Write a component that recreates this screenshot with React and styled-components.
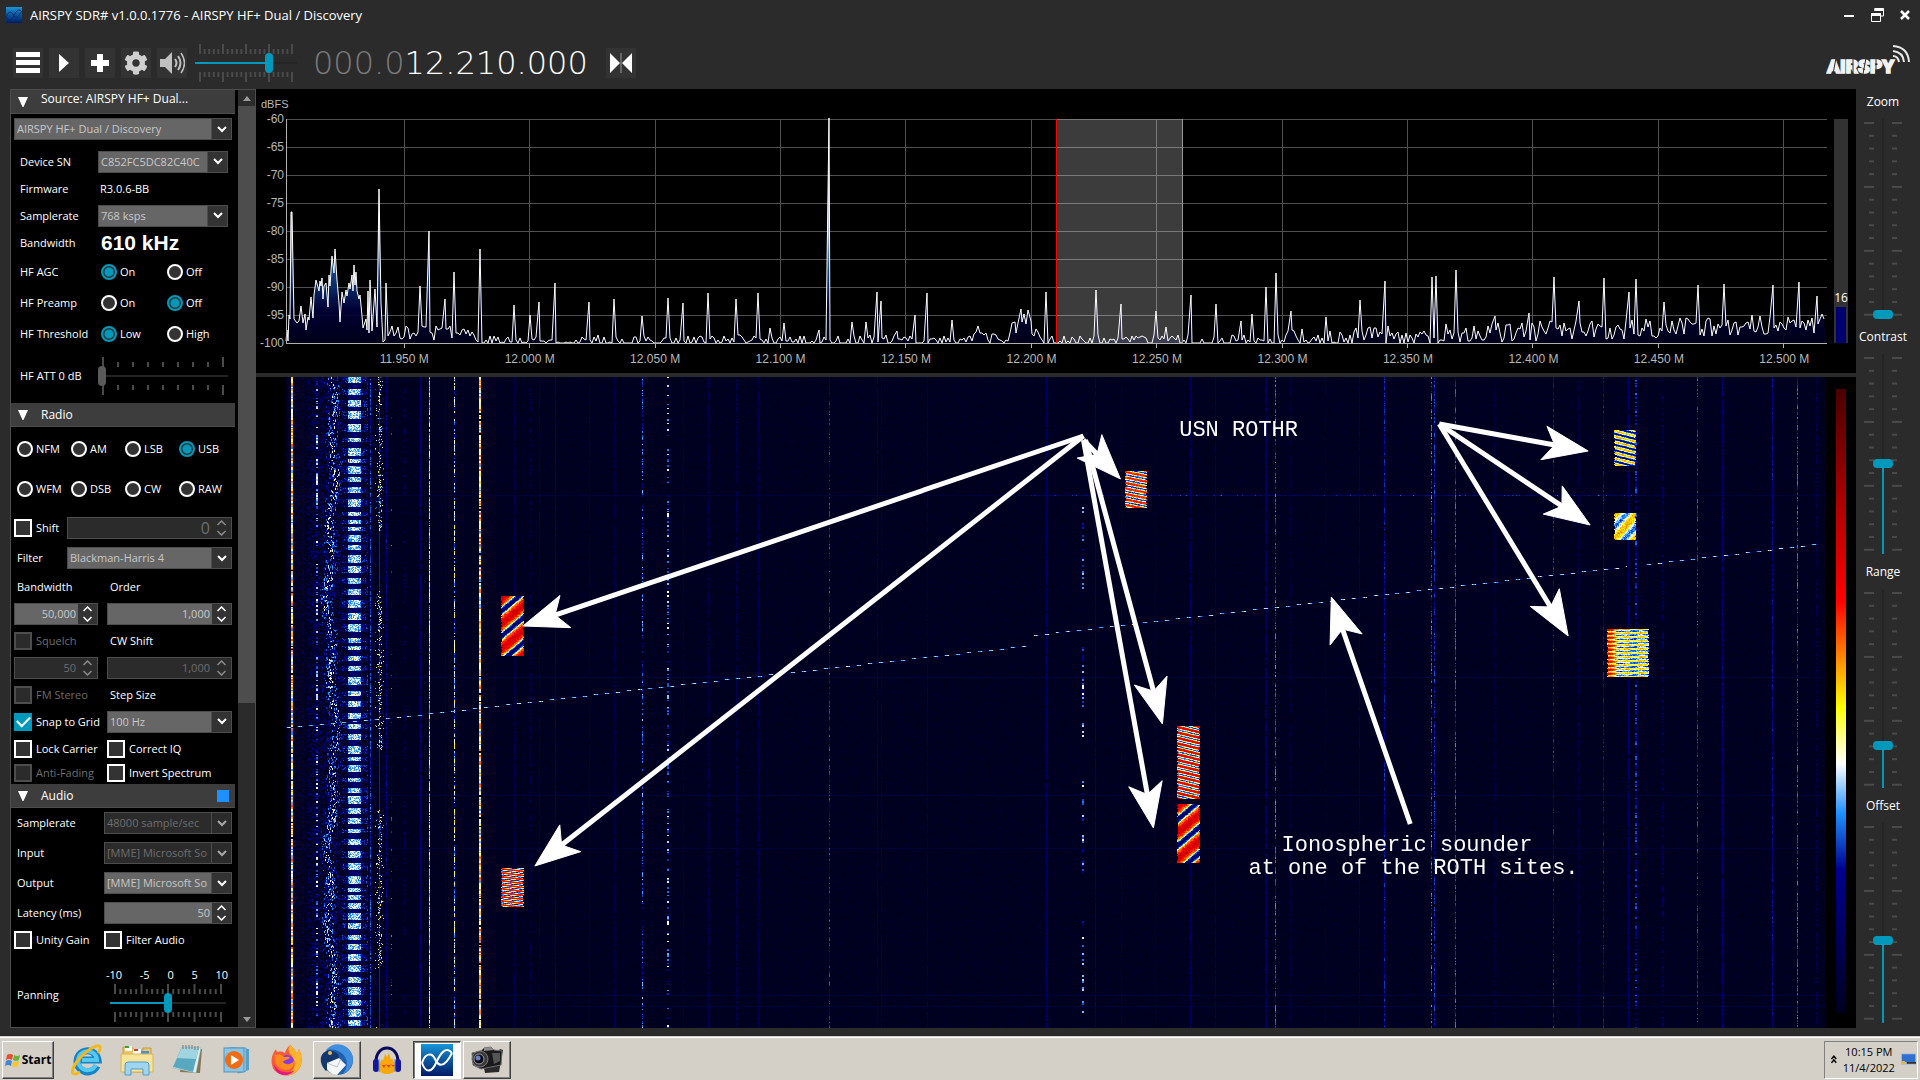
import { useEffect, useId, useRef, useState } from 'react';
import styled, { createGlobalStyle, css } from 'styled-components';
import { FaCog } from 'react-icons/fa';

const color = {
    window: '#2b2b2b',
    button: '#333333',
    header: '#3d3d3d',
    line: '#4d4d4d',
    field: '#666666',
    fieldText: '#c8c8c8',
    muted: '#6e6e6e',
    accent: '#0099bc',
    task: '#d4d0c8',
};

const GlobalStyle = createGlobalStyle`
    * {
        box-sizing: border-box;
    }

    body {
        margin: 0;
        background: ${color.window};
        color: #fff;
        font: 11px/14px 'Open Sans', 'Noto Sans', sans-serif;
    }

    button, input, select {
        margin: 0;
        padding: 0;
        border: 0;
        font: inherit;
        color: inherit;
    }
`;

/* ---------- helpers ---------- */

function makeRandom(seed) {
    let a = seed;
    return () => {
        a = (a + 0x6d2b79f5) | 0;
        let t = Math.imul(a ^ (a >>> 15), 1 | a);
        t = (t + Math.imul(t ^ (t >>> 7), 61 | t)) ^ t;
        return ((t ^ (t >>> 14)) >>> 0) / 4294967296;
    };
}

/* ---------- window frame ---------- */

const Screen = styled.div`
    display: flex;
    flex-direction: column;
    min-height: 100vh;
`;

const TitleBar = styled.header`
    display: flex;
    align-items: center;
    height: 30px;
    padding: 0 5px 0 6px;
`;

const TitleText = styled.h1`
    flex: 1;
    margin: 0 0 0 8px;
    font-size: 13px;
    font-weight: 400;
`;

const WindowButton = styled.button`
    display: flex;
    align-items: center;
    justify-content: center;
    width: 28px;
    height: 24px;
    background: none;

    &:last-child {
        width: 20px;
        margin-left: 4px;
    }
`;

const Toolbar = styled.div`
    display: flex;
    align-items: center;
    height: 59px;
    padding: 6px 10px 0 13px;
`;

const ToolGroup = styled.div`
    display: flex;
    gap: 6px;
`;

const ToolButton = styled.button`
    display: flex;
    align-items: center;
    justify-content: center;
    width: 30px;
    height: 30px;
    background: ${color.button};
    color: #fff;
`;

const VolumeBox = styled.div`
    width: 102px;
    margin: 0 16px 0 8px;
`;

const Frequency = styled.output`
    display: flex;
    margin-right: 18px;
    color: #fff;
    font: 200 32px/32px 'DejaVu Sans Light', 'DejaVu Sans', sans-serif;
`;

const Idle = styled.span`
    color: #7a7a7a;
`;

const Logo = styled.svg`
    margin: 0 0 8px auto;
`;

const Workspace = styled.main`
    flex: 1;
    display: flex;
    min-height: 0;
    padding: 0 0 8px 10px;
`;

/* ---------- side panel ---------- */

const Sidebar = styled.aside`
    display: flex;
    flex: none;
    width: 246px;
    border: 1px solid ${color.line};
    border-right: 0;
    background: #000;
`;

const Sections = styled.div`
    flex: 1;
    margin-right: 3px;
`;

const SectionHeader = styled.h2`
    display: flex;
    align-items: center;
    gap: 13px;
    height: 24px;
    margin: 0;
    padding: 0 6px 0 7px;
    border-bottom: 1px solid ${color.line};
    background: ${color.header};
    font-size: 12px;
    font-weight: 400;
`;

const HeaderText = styled.span`
    flex: 1;
    padding-bottom: ${p => (p.$raised ? '6px' : '0')};
`;

const Marker = styled.span`
    width: 12px;
    height: 12px;
    background: #1e90ff;
`;

const Row = styled.div`
    display: grid;
    grid-template-columns: ${p => p.$cols || '1fr'};
    align-items: center;
    height: ${p => p.$h || 27}px;
    margin-bottom: ${p => (p.$apart ? '4px' : '0')};
    padding: ${p => (p.$low ? '12px' : '0')} ${p => (p.$inset ? '7px 0 9px' : '3px 0')};
`;

const ModeGrid = styled.div`
    display: grid;
    grid-template-columns: repeat(4, 54px);
    grid-auto-rows: 40px;
    align-items: center;
    padding: 2px 0 4px 6px;
`;

const Caption = styled.label`
    padding-left: ${p => (p.$pad ? '3px' : '0')};
`;

const Strong = styled.span`
    padding-left: 3px;
    font: bold 21px/22px 'Liberation Sans', Arial, sans-serif;
    white-space: nowrap;
`;

const Value = styled.span`
    padding-left: 2px;
`;

const Choices = styled.div`
    display: grid;
    grid-template-columns: 66px 1fr;
    padding-left: 3px;
`;

const Option = styled.label`
    display: flex;
    align-items: center;
    gap: ${p => (p.$wide ? '4px' : '3px')};
    color: ${p => (p.$off ? color.muted : '#fff')};
    white-space: nowrap;
`;

const RadioInput = styled.input`
    appearance: none;
    flex: none;
    width: 16px;
    height: 16px;
    border: 2px solid #fff;
    border-radius: 50%;
    background: ${color.button};

    &:checked {
        border-color: ${color.accent};
        background: radial-gradient(${color.accent} 4px, ${color.button} 5px);
    }
`;

const CheckInput = styled.input`
    appearance: none;
    flex: none;
    display: grid;
    place-items: center;
    width: 18px;
    height: 18px;
    border: 2px solid #fff;
    background: ${color.button};

    &:disabled {
        border-color: ${color.line};
        background: ${color.window};
    }

    &:checked {
        border-color: ${color.accent};
        background: ${color.accent};
    }

    &:checked::after {
        content: '';
        width: 11px;
        height: 6px;
        margin-bottom: 4px;
        border: solid #fff;
        border-width: 0 0 2px 2px;
        transform: rotate(-45deg);
    }
`;

const fieldBox = css`
    display: flex;
    height: 22px;
    min-width: 0;
    border: 1px solid ${color.line};
    background: ${p => (p.$off ? color.window : color.field)};
    color: ${p => (p.$off ? color.muted : color.fieldText)};
`;

const ComboBox = styled.span`
    ${fieldBox}
`;

const ComboSelect = styled.select`
    appearance: none;
    flex: 1;
    min-width: 0;
    padding-left: 2px;
    background: none;
    outline: 0;
    opacity: 1;
`;

const ComboArrow = styled.span`
    display: grid;
    place-items: center;
    width: 20px;
    border-left: 1px solid ${color.line};
    background: ${p => (p.$off ? color.window : color.button)};
    color: ${p => (p.$off ? '#a8a8a8' : '#fff')};
    pointer-events: none;
`;

const SpinBox = styled.span`
    ${fieldBox}
`;

const SpinInput = styled.input`
    flex: 1;
    min-width: 0;
    padding-right: 2px;
    background: none;
    outline: 0;
    text-align: right;
    font-size: ${p => (p.$large ? '16px' : '11px')};
`;

const SpinButtons = styled.span`
    display: flex;
    flex-direction: column;
    justify-content: center;
    width: 19px;
    background: ${p => (p.$off ? color.window : color.button)};
    color: ${p => (p.$off ? '#8c8c8c' : '#fff')};
`;

const SpinButton = styled.button`
    display: grid;
    place-items: center;
    height: 10px;
    background: none;
`;

const SpinGap = styled.div`
    width: ${p => (p.$short ? '84px' : '100%')};
    display: grid;
`;

const Scrollbar = styled.div`
    display: flex;
    flex-direction: column;
    width: 18px;
    border-right: 1px solid ${color.line};
    background: ${color.window};
`;

const ScrollButton = styled.button`
    display: grid;
    place-items: center;
    height: 16px;
    background: ${color.window};
`;

const ScrollTrack = styled.div`
    flex: 1;
    display: flex;
    flex-direction: column;
`;

const ScrollThumb = styled.div`
    height: 66%;
    background: ${color.line};
`;

const ScaleNumbers = styled.div`
    display: flex;
    justify-content: space-between;
    margin: 0 -2px 2px -4px;
`;

const PanBox = styled.div`
    width: 116px;
    margin-left: 6px;
`;

const AttBox = styled.div`
    width: 130px;
`;

/* ---------- sliders ---------- */

const SliderStack = styled.div`
    display: grid;
    grid-template: minmax(0, 1fr) / minmax(0, 1fr);
    width: 100%;
    height: ${p => (p.$vertical ? '100%' : '38px')};

    > * {
        grid-area: 1 / 1;
    }
`;

const TickInset = styled.div`
    min-height: 0;
    padding: ${p => (p.$vertical ? '3px 0 5px' : '0 6px 0 4px')};
`;

const TickSvg = styled.svg`
    display: block;
    width: 100%;
    height: 100%;
    overflow: visible;
`;

const HRange = styled.input`
    appearance: none;
    width: 100%;
    height: 20px;
    align-self: center;
    background: linear-gradient(to right, ${p => p.$tint} ${p => p.$fill}%, #242424 ${p => p.$fill}%) center / 100% 2px no-repeat;

    &::-webkit-slider-thumb {
        appearance: none;
        width: 8px;
        height: 20px;
        border-radius: 4px;
        background: ${p => p.$thumb};
    }
`;

const VRange = styled.input`
    appearance: none;
    writing-mode: vertical-lr;
    direction: rtl;
    width: 20px;
    height: 100%;
    min-height: 0;
    justify-self: center;
    background: linear-gradient(to top, ${color.accent} ${p => p.$fill}%, #242424 ${p => p.$fill}%) center / 2px 100% no-repeat;

    &::-webkit-slider-thumb {
        appearance: none;
        width: 20px;
        height: 9px;
        border-radius: 4px;
        background: ${color.accent};
    }
`;

const LevelColumn = styled.aside`
    display: flex;
    flex-direction: column;
    flex: none;
    width: 64px;
    padding-right: 10px;
`;

const LevelGroup = styled.div`
    flex: 1;
    display: flex;
    flex-direction: column;
    align-items: center;
    min-height: 0;
    padding-bottom: 5px;
    font-size: 12px;
`;

const LevelLabel = styled.label`
    height: 30px;
    line-height: 26px;
`;

const LevelTrack = styled.div`
    flex: 1;
    width: 40px;
    min-height: 0;
`;

/* ---------- spectrum and waterfall ---------- */

const Displays = styled.div`
    flex: 1;
    display: flex;
    flex-direction: column;
    gap: 4px;
    min-width: 0;
`;

const SpectrumPanel = styled.section`
    display: grid;
    grid-template: 30px 224px 30px / 30px minmax(0, 1fr) 29px;
    background: #000;
    color: #b8b8b8;
    font: 12px/14px 'Liberation Sans', Arial, sans-serif;
`;

const Unit = styled.span`
    grid-column: 1 / -1;
    padding: 8px 0 0 5px;
    font-size: 11px;
`;

const DbAxis = styled.div`
    display: flex;
    flex-direction: column;
    justify-content: space-between;
    align-items: flex-end;
    padding-right: 2px;
`;

const DbMark = styled.span`
    height: 0;
    line-height: 0;
`;

const PlotSvg = styled.svg`
    width: 100%;
    height: 100%;
    overflow: visible;
`;

const Meter = styled.div`
    display: flex;
    flex-direction: column;
    justify-content: flex-end;
    align-items: center;
    width: 14px;
    margin-left: 7px;
    background: #323232;
    color: #fff;
    font: 12px/18px 'Open Sans', sans-serif;
`;

const MeterBar = styled.div`
    width: 10px;
    height: 36px;
    background: #000070;
`;

const FrequencyAxis = styled.div`
    grid-column: 2;
    display: flex;
    margin-right: -1.3%;
    padding: 9px 0 0 3.6%;

    span {
        flex: 1;
        text-align: center;
    }
`;

const WaterfallPanel = styled.section`
    flex: 1;
    display: grid;
    grid-template-columns: 30px minmax(0, 1fr) 30px;
    grid-template-rows: minmax(0, 1fr);
    min-height: 0;
    background: #000;
`;

const WaterfallArea = styled.div`
    position: relative;
    grid-column: 2;
`;

const WaterfallCanvas = styled.canvas`
    position: absolute;
    inset: 0;
    width: 100%;
    height: 100%;
    image-rendering: pixelated;
`;

const ArrowSvg = styled.svg`
    position: absolute;
    inset: 0;
    width: 100%;
    height: 100%;
    overflow: visible;
`;

const Note = styled.p`
    position: absolute;
    left: ${p => p.$left}%;
    top: ${p => p.$top}%;
    margin: 0;
    font: 22px/23px 'Liberation Mono', 'Courier New', monospace;
    text-align: center;
    white-space: pre;
`;

const Palette = styled.div`
    width: 10px;
    margin: 12px 0 15px 10px;
    background: linear-gradient(to top, #000020, #000090 23%, #1e90ff 32%, #fff 40%, #ff0 49%, #f00 66%, #4b0000);
`;

/* ---------- taskbar ---------- */

const Taskbar = styled.footer`
    display: flex;
    align-items: center;
    height: 44px;
    padding: 2px 2px 0;
    border-top: 1px solid ${color.task};
    background: ${color.task};
    box-shadow: inset 0 1px #fff;
    color: #000;
`;

const raised = css`
    border: 1px solid;
    border-color: #fff #404040 #404040 #fff;
    box-shadow: inset -1px -1px #808080;
`;

const StartButton = styled.button`
    ${raised}
    display: flex;
    align-items: center;
    justify-content: center;
    gap: 1px;
    width: 52px;
    height: 38px;
    margin-right: 8px;
    background: ${color.task};
    font: bold 12px/16px 'Open Sans', sans-serif;
`;

const TaskButton = styled.button`
    display: grid;
    place-items: center;
    width: 50px;
    height: 38px;
    background: none;
    ${p => p.$open && css`
        ${raised}
        width: 48px;
        margin: 0 1px;
    `}
    ${p => p.$active && css`
        width: 48px;
        margin: 0 1px;
        border: 1px solid;
        border-color: #404040 #fff #fff #404040;
        background: #fff;
        box-shadow: inset 1px 1px #808080;
    `}
`;

const Tray = styled.div`
    display: flex;
    align-items: center;
    gap: 6px;
    width: 94px;
    height: 38px;
    margin-left: auto;
    padding: 0 1px 0 6px;
    border: 1px solid;
    border-color: #808080 #fff #fff #808080;
`;

const Clock = styled.time`
    flex: 1;
    text-align: center;
    line-height: 16px;
    white-space: pre;
`;

/* ---------- small controls ---------- */

function Ticks({ count, every, vertical, ends }) {
    const marks = Array.from({ length: count }, (_, i) => i);
    return (
        <TickSvg aria-hidden="true">
            {marks.map(i => {
                const at = `${(i / (count - 1)) * 100}%`;
                const big = ends ? i === 0 || i === count - 1 : i % every === 0;
                const len = big ? 10 : 5;
                return vertical ? (
                    <g key={i} fill="#4a4a4a">
                        <rect x={11 - len} y={at} width={len} height="2" />
                        <rect x="29" y={at} width={len} height="2" />
                    </g>
                ) : (
                    <g key={i} fill="#4a4a4a">
                        <rect x={at} y={10 - len} width="2" height={len} />
                        <rect x={at} y="28" width="2" height={len} />
                    </g>
                );
            })}
        </TickSvg>
    );
}

function HSlider({ id, label, start, count, every = 5, ends, gray }) {
    const [value, setValue] = useState(start);
    return (
        <SliderStack>
            <TickInset><Ticks count={count} every={every} ends={ends} /></TickInset>
            <HRange
                id={id}
                type="range"
                aria-label={label}
                value={value}
                onChange={e => setValue(Number(e.target.value))}
                $fill={value}
                $tint={gray ? '#242424' : color.accent}
                $thumb={gray ? '#5a5a5a' : color.accent}
            />
        </SliderStack>
    );
}

function VSlider({ name, start }) {
    const id = useId();
    const [value, setValue] = useState(start);
    return (
        <LevelGroup>
            <LevelLabel htmlFor={id}>{name}</LevelLabel>
            <LevelTrack>
                <SliderStack $vertical>
                    <TickInset $vertical><Ticks count={16} every={5} vertical /></TickInset>
                    <VRange id={id} type="range" value={value} onChange={e => setValue(Number(e.target.value))} $fill={value} />
                </SliderStack>
            </LevelTrack>
        </LevelGroup>
    );
}

function Combo({ id, label, value, off }) {
    return (
        <ComboBox $off={off}>
            <ComboSelect id={id} aria-label={label} disabled={off}>
                <option>{value}</option>
            </ComboSelect>
            <ComboArrow $off={off}>
                <svg width="10" height="7" viewBox="0 0 10 7" fill="none" stroke="currentColor" strokeWidth="2">
                    <path d="M1 1l4 4 4-4" />
                </svg>
            </ComboArrow>
        </ComboBox>
    );
}

function Spin({ id, label, value, off, large, short }) {
    return (
        <SpinGap $short={short}>
            <SpinBox $off={off}>
                <SpinInput id={id} aria-label={label} defaultValue={value} disabled={off} $large={large} />
                <SpinButtons $off={off}>
                    <SpinButton aria-label="Increase">
                        <svg width="9" height="6" viewBox="0 0 9 6" fill="none" stroke="currentColor" strokeWidth="1.5"><path d="M.5 5l4-4 4 4" /></svg>
                    </SpinButton>
                    <SpinButton aria-label="Decrease">
                        <svg width="9" height="6" viewBox="0 0 9 6" fill="none" stroke="currentColor" strokeWidth="1.5"><path d="M.5 1l4 4 4-4" /></svg>
                    </SpinButton>
                </SpinButtons>
            </SpinBox>
        </SpinGap>
    );
}

function Check({ text, on, off }) {
    return (
        <Option $off={off} $wide>
            <CheckInput type="checkbox" defaultChecked={on} disabled={off} />
            {text}
        </Option>
    );
}

function Radios({ name, options, picked }) {
    return options.map(o => (
        <Option key={o}>
            <RadioInput type="radio" name={name} defaultChecked={o === picked} />
            {o}
        </Option>
    ));
}

function Header({ text, raisedText, children }) {
    return (
        <SectionHeader>
            <svg width="10" height="10" viewBox="0 0 10 10" fill="#fff"><path d="M0 0h10L5.500 10h-1z" /></svg>
            <HeaderText $raised={raisedText}>{text}</HeaderText>
            {children}
        </SectionHeader>
    );
}

/* ---------- panels ---------- */

const SWITCHES = [
    ['HF AGC', ['On', 'Off'], 'On'],
    ['HF Preamp', ['On', 'Off'], 'Off'],
    ['HF Threshold', ['Low', 'High'], 'Low'],
];

function SourceSection() {
    return (
        <section>
            <Header text="Source: AIRSPY HF+ Dual..." raisedText />
            <Row $h={30} $apart><Combo label="Source" value="AIRSPY HF+ Dual / Discovery" /></Row>
            <Row $inset $cols="78px 1fr">
                <Caption htmlFor="sn">Device SN</Caption>
                <Combo id="sn" value="C852FC5DC82C40C" />
            </Row>
            <Row $inset $cols="78px 1fr">
                <span>Firmware</span>
                <Value>R3.0.6-BB</Value>
            </Row>
            <Row $inset $cols="78px 1fr">
                <Caption htmlFor="rate">Samplerate</Caption>
                <Combo id="rate" value="768 ksps" />
            </Row>
            <Row $inset $cols="78px 1fr">
                <span>Bandwidth</span>
                <Strong>610 kHz</Strong>
            </Row>
            {SWITCHES.map(([name, options, picked]) => (
                <Row key={name} $inset $h={31} $cols="78px 1fr">
                    <span>{name}</span>
                    <Choices role="radiogroup" aria-label={name}>
                        <Radios name={name} options={options} picked={picked} />
                    </Choices>
                </Row>
            ))}
            <Row $inset $h={54} $cols="78px 1fr">
                <Caption htmlFor="att">HF ATT 0 dB</Caption>
                <AttBox><HSlider id="att" start={0} count={9} ends gray /></AttBox>
            </Row>
        </section>
    );
}

function RadioSection() {
    return (
        <section>
            <Header text="Radio" />
            <ModeGrid role="radiogroup" aria-label="Mode">
                <Radios name="mode" options={['NFM', 'AM', 'LSB', 'USB', 'WFM', 'DSB', 'CW', 'RAW']} picked="USB" />
            </ModeGrid>
            <Row $h={30} $cols="53px 1fr">
                <Check text="Shift" />
                <Spin label="Shift" value="0" off large />
            </Row>
            <Row $h={30} $cols="53px 1fr">
                <Caption $pad htmlFor="filter">Filter</Caption>
                <Combo id="filter" value="Blackman-Harris 4" />
            </Row>
            <Row $cols="93px 1fr">
                <Caption $pad htmlFor="bw">Bandwidth</Caption>
                <Caption $pad htmlFor="order">Order</Caption>
            </Row>
            <Row $cols="93px 1fr">
                <Spin id="bw" value="50,000" short />
                <Spin id="order" value="1,000" />
            </Row>
            <Row $cols="93px 1fr">
                <Check text="Squelch" off />
                <Caption $pad htmlFor="cw">CW Shift</Caption>
            </Row>
            <Row $cols="93px 1fr">
                <Spin label="Squelch" value="50" off short />
                <Spin id="cw" value="1,000" off />
            </Row>
            <Row $cols="93px 1fr">
                <Check text="FM Stereo" off />
                <Caption $pad htmlFor="step">Step Size</Caption>
            </Row>
            <Row $cols="93px 1fr">
                <Check text="Snap to Grid" on />
                <Combo id="step" value="100 Hz" />
            </Row>
            <Row $cols="93px 1fr">
                <Check text="Lock Carrier" />
                <Check text="Correct IQ" />
            </Row>
            <Row $h={22} $cols="93px 1fr">
                <Check text="Anti-Fading" off />
                <Check text="Invert Spectrum" />
            </Row>
        </section>
    );
}

function AudioSection() {
    return (
        <section>
            <Header text="Audio"><Marker /></Header>
            <Row $h={30} $cols="90px 1fr">
                <Caption $pad htmlFor="arate">Samplerate</Caption>
                <Combo id="arate" value="48000 sample/sec" off />
            </Row>
            <Row $h={30} $cols="90px 1fr">
                <Caption $pad htmlFor="ain">Input</Caption>
                <Combo id="ain" value="[MME] Microsoft So" off />
            </Row>
            <Row $h={30} $cols="90px 1fr">
                <Caption $pad htmlFor="aout">Output</Caption>
                <Combo id="aout" value="[MME] Microsoft So" />
            </Row>
            <Row $h={30} $cols="90px 1fr">
                <Caption $pad htmlFor="latency">Latency (ms)</Caption>
                <Spin id="latency" value="50" />
            </Row>
            <Row $h={24} $cols="90px 1fr">
                <Check text="Unity Gain" />
                <Check text="Filter Audio" />
            </Row>
            <Row $h={74} $low $cols="90px 1fr">
                <Caption $pad htmlFor="pan">Panning</Caption>
                <PanBox>
                    <ScaleNumbers>
                        {[-10, -5, 0, 5, 10].map(n => <span key={n}>{n}</span>)}
                    </ScaleNumbers>
                    <HSlider id="pan" start={50} count={21} />
                </PanBox>
            </Row>
        </section>
    );
}

/* ---------- spectrum ---------- */

const PLOT_W = 1541;

const LEFT_TRACE = [
    [0, 222], [1, 211], [2, 222], [3, 196], [4, 200], [5, 93], [6, 93], [8, 200], [11, 204], [13, 202], [15, 187],
    [17, 204], [19, 195], [20, 211], [22, 198], [23, 201], [25, 178], [27, 199], [28, 176], [30, 161], [33, 172],
    [34, 162], [35, 167], [36, 159], [37, 180], [38, 167], [40, 164], [42, 188], [43, 156], [44, 167], [46, 137],
    [48, 154], [49, 130], [51, 161], [53, 184], [54, 203], [56, 173], [58, 184], [60, 171], [61, 177], [63, 164],
    [64, 170], [66, 156], [67, 172], [68, 146], [69, 166], [70, 153], [71, 172], [73, 180], [74, 176], [76, 197],
    [77, 209], [80, 200], [81, 211], [82, 172], [83, 214], [84, 161], [86, 212], [89, 170], [91, 208], [93, 70],
    [95, 184], [97, 223], [99, 221], [100, 164], [102, 217],
];

const PEAKS = [
    [134, 167], [143, 112], [159, 180], [168, 153], [194, 130], [228, 186], [244, 196], [253, 183], [269, 164],
    [303, 183], [328, 180], [356, 197], [382, 179], [397, 184], [422, 174], [450, 180], [472, 174], [484, 209],
    [498, 204], [533, 211], [543, -1], [566, 203], [580, 203], [591, 173], [595, 182], [611, 212], [629, 196],
    [641, 174], [666, 201], [692, 207], [726, 204], [729, 203], [735, 190], [738, 195], [742, 191], [745, 202],
    [760, 173], [810, 171], [835, 185], [870, 192], [880, 208], [905, 176], [930, 185], [955, 202], [966, 195],
    [980, 168], [990, 154], [1005, 192], [1040, 198], [1074, 181], [1099, 162], [1146, 158], [1150, 157],
    [1170, 151], [1209, 197], [1243, 194], [1268, 158], [1293, 182], [1318, 159], [1343, 173], [1350, 160],
    [1378, 183], [1412, 166], [1438, 165], [1487, 166], [1513, 163], [1531, 177],
];

function buildTrace() {
    const rnd = makeRandom(77);
    const points = [...LEFT_TRACE];
    for (let x = 104; x < PLOT_W - 1; x += 2) {
        const peak = PEAKS.find(p => p[0] === x || p[0] === x + 1);
        if (peak) {
            points.push([peak[0], peak[1]]);
            continue;
        }
        let y;
        if (x < 190) y = 214 + (rnd() - 0.5) * 15;
        else if (x < 1000) {
            const hump = Math.exp(-(((x - 738) / 12) ** 2)) * 18 + Math.exp(-(((x - 690) / 14) ** 2)) * 5;
            y = 228 - rnd() * 12 - hump;
        } else {
            const t = (x - 1000) / 540;
            y = 220 - t * 16 + (rnd() - 0.5) * 20;
        }
        points.push([x, Math.min(224, Math.round(y))]);
    }
    return points.map(p => p.join(',')).join(' ');
}

const TRACE = buildTrace();
const FREQUENCIES = Array.from({ length: 12 }, (_, i) => (11.95 + i * 0.05).toFixed(3));
const LEVELS = [-60, -65, -70, -75, -80, -85, -90, -95, -100];

function Spectrum() {
    return (
        <SpectrumPanel>
            <Unit>dBFS</Unit>
            <DbAxis>
                {LEVELS.map(db => <DbMark key={db}>{db}</DbMark>)}
            </DbAxis>
            <PlotSvg viewBox="0 0 1541 224" preserveAspectRatio="none" role="img" aria-label="Spectrum">
                <defs>
                    <linearGradient id="trace" gradientUnits="userSpaceOnUse" x1="0" x2="0" y1="60" y2="224">
                        <stop offset="0" stopColor="#fff" />
                        <stop offset="0.35" stopColor="#a8c0e0" />
                        <stop offset="0.55" stopColor="#13509c" />
                        <stop offset="0.8" stopColor="#000038" />
                        <stop offset="1" stopColor="#00001c" />
                    </linearGradient>
                </defs>
                <g fill="#505050">
                    {LEVELS.slice(0, -1).map((db, i) => <rect key={db} x="0" y={i * 28} width="1541" height="1" />)}
                    {FREQUENCIES.map((f, i) => <rect key={f} x={Math.round(118 + i * 125.36)} y="0" width="1" height="224" />)}
                </g>
                <polygon points={`0,224 ${TRACE} 1540,224`} fill="url(#trace)" fillOpacity="0.9" />
                <polyline points={TRACE} fill="none" stroke="#fff" strokeWidth="1" />
                <g fill="#b0b0b0">
                    <rect x="0" y="0" width="1" height="225" />
                    <rect x="0" y="224" width="1541" height="1" />
                    {FREQUENCIES.map((f, i) => <rect key={f} x={Math.round(118 + i * 125.36)} y="224" width="1" height="5" />)}
                </g>
                <rect x="771" y="0" width="126" height="224" fill="#fff" fillOpacity="0.235" />
                <rect x="896" y="0" width="1" height="224" fill="#999" />
                <rect x="770" y="0" width="1" height="224" fill="#f00" />
            </PlotSvg>
            <Meter>
                16
                <MeterBar />
            </Meter>
            <FrequencyAxis>
                {FREQUENCIES.map(f => <span key={f}>{f} M</span>)}
            </FrequencyAxis>
        </SpectrumPanel>
    );
}

/* ---------- waterfall ---------- */

const STOPS = [
    [0, 0, 0, 26], [0.1, 0, 0, 70], [0.23, 0, 0, 144], [0.32, 30, 144, 255], [0.4, 255, 255, 255],
    [0.49, 255, 255, 0], [0.66, 255, 0, 0], [1, 75, 0, 0],
];

function paletteAt(v) {
    const t = Math.max(0, Math.min(0.999, v));
    let i = 1;
    while (STOPS[i][0] <= t) i += 1;
    const a = STOPS[i - 1];
    const b = STOPS[i];
    const k = (t - a[0]) / (b[0] - a[0]);
    return [1, 2, 3].map(n => a[n] + (b[n] - a[n]) * k);
}

// x, width, lowest level, highest level, share of rows that light up
const CARRIERS = [
    [5, 2, 0.3, 0.62, 0.97], [30, 2, 0.15, 0.42, 0.5], [84, 1, 0.18, 0.33, 0.9], [81, 1, 0.1, 0.3, 0.4],
    [100, 1, 0.12, 0.25, 0.9], [105, 1, 0.1, 0.33, 0.12], [118, 1, 0.08, 0.2, 0.3], [134, 1, 0.14, 0.22, 0.95],
    [143, 1, 0.34, 0.66, 0.95], [159, 1, 0.08, 0.12, 0.9], [168, 1, 0.2, 0.52, 0.85], [193, 2, 0.32, 0.62, 0.95],
    [228, 1, 0.08, 0.14, 0.9], [244, 1, 0.08, 0.15, 0.5], [253, 1, 0.08, 0.14, 0.9], [269, 1, 0.12, 0.22, 0.95],
    [303, 1, 0.08, 0.13, 0.9], [328, 1, 0.08, 0.13, 0.9], [356, 1, 0.15, 0.37, 0.6], [381, 2, 0.2, 0.42, 0.4],
    [397, 1, 0.08, 0.13, 0.9], [422, 1, 0.1, 0.15, 0.8], [450, 2, 0.08, 0.14, 0.8], [472, 1, 0.08, 0.15, 0.9],
    [543, 1, 0.14, 0.3, 0.95], [591, 1, 0.08, 0.18, 0.9], [595, 1, 0.08, 0.14, 0.8], [641, 1, 0.08, 0.15, 0.9],
    [760, 1, 0.12, 0.18, 0.95], [810, 1, 0.12, 0.22, 0.95], [836, 1, 0.08, 0.14, 0.7], [870, 1, 0.06, 0.12, 0.8],
    [905, 1, 0.1, 0.18, 0.9], [930, 1, 0.1, 0.17, 0.9], [980, 2, 0.1, 0.17, 0.9], [990, 1, 0.18, 0.33, 0.97],
    [1005, 1, 0.06, 0.12, 0.7], [1040, 1, 0.06, 0.12, 0.7], [1074, 1, 0.1, 0.17, 0.9], [1099, 1, 0.14, 0.28, 0.97],
    [1146, 1, 0.16, 0.34, 0.9], [1149, 1, 0.18, 0.3, 0.9], [1170, 1, 0.2, 0.32, 0.97], [1209, 1, 0.06, 0.12, 0.8],
    [1268, 1, 0.14, 0.28, 0.95], [1293, 1, 0.07, 0.13, 0.8], [1318, 1, 0.16, 0.27, 0.97], [1343, 1, 0.12, 0.22, 0.95],
    [1350, 2, 0.12, 0.3, 0.7], [1377, 2, 0.08, 0.18, 0.5], [1412, 1, 0.16, 0.3, 0.97], [1437, 1, 0.12, 0.24, 0.95],
    [1487, 1, 0.14, 0.26, 0.97], [1512, 1, 0.2, 0.32, 0.97], [1531, 1, 0.08, 0.16, 0.6],
];

// x, y, width, height, rise per pixel across, stripe period, base level, swing, solid bands
const BURSTS = [
    [215, 219, 23, 60, 0.85, 25, 0.46, 0.23, true],
    [215, 491, 23, 39, -0.12, 4, 0.46, 0.22, false],
    [840, 94, 22, 37, -0.2, 5.5, 0.46, 0.2, false],
    [892, 349, 23, 73, -0.24, 5.5, 0.5, 0.22, false],
    [892, 427, 23, 59, 0.85, 26, 0.46, 0.23, true],
    [1329, 53, 22, 36, -0.25, 5.5, 0.36, 0.17, false],
    [1329, 136, 22, 27, 1.1, 23, 0.42, 0.12, false],
    [1322, 252, 42, 48, 0.03, 4, 0.4, 0.11, false],
];

const SOUNDER = [
    [0, 350, 120, 339], [120, 339, 361, 311], [361, 311, 745, 268], [747, 258, 1109, 216],
    [1109, 216, 1342, 189], [1361, 187, 1537, 166],
];

function drawWaterfall(canvas) {
    const w = canvas.width;
    const h = canvas.height;
    const rnd = makeRandom(2022);
    const level = new Float32Array(w * h);
    const put = (x, y, v) => {
        if (x >= 0 && x < w && y >= 0 && y < h) level[Math.round(y) * w + Math.round(x)] = v;
    };

    for (let i = 0; i < level.length; i += 1) level[i] = rnd() < 0.06 ? 0.05 : rnd() * 0.025;

    // faint full-width rows
    [118, 300, 418, 471, 618, 629].forEach(y => {
        for (let x = 0; x < w; x += 1) put(x, y, 0.04 + rnd() * 0.07);
    });
    for (let x = 745; x < 1360; x += 1) put(x, 118, 0.1 + rnd() * rnd() * 0.22);

    // wide band noise on the left edge
    let burst = 0;
    let bright = false;
    for (let y = 0; y < h; y += 1) {
        for (let x = 0; x < 100; x += 1) if (rnd() < 0.3) put(x, y, rnd() * 0.12);
        const centre = 45 + 3 * Math.sin(y / 46) + 2 * Math.sin(y / 13);
        for (let x = 22; x < 57; x += 1) {
            const near = Math.exp(-(((x - centre) / 6) ** 2));
            if (rnd() < near * 0.3 + 0.12) {
                const v = 0.1 + rnd() * (0.12 + near * 0.22);
                put(x, y, v);
                put(x, y + 1, v);
            }
        }
        if (burst <= 0) {
            bright = !bright;
            burst = bright ? 4 + Math.floor(rnd() * 5) : 3 + Math.floor(rnd() * 4);
        }
        burst -= 1;
        for (let x = 56; x < 81; x += 1) {
            const core = x > 61 && x < 75;
            const mid = Math.exp(-(((x - 68) / 6) ** 2));
            if (bright) put(x, y, core ? 0.24 + mid * 0.07 + rnd() * 0.14 : rnd() * 0.29);
            else if (core) put(x, y, 0.04 + mid * 0.08 + rnd() * 0.1);
            else put(x, y, rnd() * 0.06);
        }
    }

    CARRIERS.forEach(([cx, cw, lo, hi, share]) => {
        let v = 0;
        for (let y = 0; y < h; y += 1) {
            if (y % 2 === 0 || rnd() < 0.4) v = rnd() < share ? lo + rnd() * (hi - lo) : 0;
            for (let x = 0; x < cw; x += 1) if (v) put(cx + x, y, v);
        }
    });

    // drifting carrier with a steady dark red centre
    for (let y = 0; y < h; y += 1) {
        const active = Math.sin(y / 37) + Math.sin(y / 17) > -0.5;
        if (active) {
            for (let x = 89; x < 98; x += 1) {
                if (rnd() < (x > 91 && x < 96 ? 0.24 : 0.06)) put(x, y, 0.2 + rnd() * 0.32);
            }
        }
        put(93, y, active && rnd() < 0.25 ? 0.5 : 0.88);
    }

    // keyed carrier in the middle
    for (let y = 90; y < h; y += 2) {
        if (Math.sin(y / 22) > -0.55 && rnd() < 0.4) {
            const v = 0.2 + rnd() * 0.2;
            for (let x = 797; x < 799; x += 1) {
                put(x, y, v);
                put(x, y + 1, v);
            }
        }
    }

    SOUNDER.forEach(([x1, y1, x2, y2]) => {
        for (let x = x1; x < x2; x += 11) {
            const y = y1 + ((y2 - y1) * (x - x1)) / (x2 - x1);
            for (let i = 0; i < 6 && x + i < x2; i += 1) put(x + i, y, i === 0 || i === 5 ? 0.25 : 0.32 + rnd() * 0.08);
        }
    });

    BURSTS.forEach(([bx, by, bw, bh, slope, period, base, swing, solid], n) => {
        for (let y = 0; y < bh; y += 1) {
            for (let x = 0; x < bw; x += 1) {
                const wave = Math.sin(((y + x * slope) / period) * Math.PI * 2 + 1);
                let v;
                if (solid) v = wave > -0.35 ? 0.6 + wave * 0.14 : 0.6 + (wave + 0.35) * 0.6 - 0.06;
                else v = base + (wave > 0 ? Math.sqrt(wave) : -(Math.abs(wave) ** 1.5)) * swing;
                v += (rnd() - 0.5) * 0.1;
                if (n === 7) v += Math.max(0, 0.2 - x * 0.015) + 0.04 * Math.sin(x / 2.4);
                if (rnd() < 0.6 || (x > 0 && x < bw - 1)) put(bx + x, by + y, v);
            }
        }
    });

    const ctx = canvas.getContext('2d');
    const image = ctx.createImageData(w, h);
    for (let i = 0; i < level.length; i += 1) {
        const [r, g, b] = paletteAt(level[i]);
        image.data.set([r, g, b, 255], i * 4);
    }
    ctx.putImageData(image, 0, 0);
}

const ARROWS = [
    [798, 59, 237, 249], [798, 59, 249, 489], [798, 63, 835, 102], [800, 63, 877, 347], [798, 63, 868, 451],
    [1154, 47, 1303, 74], [1154, 47, 1305, 148], [1154, 47, 1283, 259], [1125, 447, 1046, 220],
];

function Arrow({ from, to }) {
    const dx = to[0] - from[0];
    const dy = to[1] - from[1];
    const len = Math.hypot(dx, dy);
    const ux = dx / len;
    const uy = dy / len;
    const at = (back, side) => `${to[0] - ux * back - uy * side},${to[1] - uy * back + ux * side}`;
    return (
        <g>
            <line x1={from[0]} y1={from[1]} x2={to[0] - ux * 34} y2={to[1] - uy * 34} stroke="#fff" strokeWidth="5" />
            <polygon points={[at(0, 0), at(45, 17), at(34, 0), at(45, -17)].join(' ')} fill="#fff" stroke="#fff" strokeWidth="1" />
        </g>
    );
}

function Waterfall() {
    const ref = useRef(null);
    useEffect(() => {
        drawWaterfall(ref.current);
    }, []);

    return (
        <WaterfallPanel>
            <WaterfallArea>
                <WaterfallCanvas ref={ref} width={1541} height={651} />
                <ArrowSvg viewBox="0 0 1541 651" preserveAspectRatio="none" aria-hidden="true">
                    {ARROWS.map(a => <Arrow key={a.join()} from={a.slice(0, 2)} to={a.slice(2)} />)}
                </ArrowSvg>
                <Note $left={58} $top={6.4}>USN ROTHR</Note>
                <Note $left={62.500} $top={70.2}>{'Ionospheric sounder \nat one of the ROTH sites.'}</Note>
            </WaterfallArea>
            <Palette />
        </WaterfallPanel>
    );
}

/* ---------- icons ---------- */

function SdrIcon({ size }) {
    return (
        <svg width={size} height={size} viewBox="0 0 32 32">
            <defs>
                <linearGradient id="sdr" x1="0" x2="0" y1="0" y2="1">
                    <stop offset="0" stopColor="#1795d8" />
                    <stop offset="1" stopColor="#001a66" />
                </linearGradient>
            </defs>
            <rect width="32" height="32" fill="url(#sdr)" />
            <g fill="none" stroke={size > 20 ? '#fff' : '#062a6a'} strokeWidth="2">
                <path d="M1 19C4 9 11 8 14 15s9 10 17-6" />
                <path d="M1 19c4 11 10 9 14 0S25 1 31 9" />
            </g>
        </svg>
    );
}

function WindowsLogo() {
    return (
        <svg width="16" height="16" viewBox="0 0 16 16">
            <path d="M2 3q3-2 6 0L7 8Q4 6 1 8z" fill="#e8502a" />
            <path d="M9 3q3 2 6 0l-1 5q-3 2-6 0z" fill="#6ab43e" />
            <path d="M1 9q3-2 6 0l-1 5q-3-2-6 0z" fill="#3f86d8" />
            <path d="M8 9q3 2 6 0l-1 5q-3 2-6 0z" fill="#f8c626" />
        </svg>
    );
}

function ExplorerEIcon() {
    return (
        <svg width="32" height="32" viewBox="0 0 32 32" fill="none">
            <path d="M26 22a10.500 10.500 0 1 1 1-6H10" stroke="#1583c8" strokeWidth="7" />
            <path d="M25 21a9.500 9.500 0 1 1 1-5H11" stroke="#55c8f2" strokeWidth="4" />
            <path d="M27 9c4-6 2-9-4-6C14 7 4 18 2 25c-2 6 2 6 7 3" stroke="#f2b81c" strokeWidth="3" />
        </svg>
    );
}

function FolderIcon() {
    return (
        <svg width="34" height="32" viewBox="0 0 34 32">
            <path d="M3 3h9l2 3h9V4h8v24H3z" fill="#e9c766" stroke="#c39b3c" />
            <rect x="5" y="2" width="7" height="5" fill="#fff" />
            <rect x="5" y="2" width="4" height="2" fill="#3aa43a" />
            <rect x="13" y="5" width="8" height="5" fill="#fff" />
            <rect x="14" y="5" width="4" height="2" fill="#d43b26" />
            <rect x="21" y="7" width="8" height="4" fill="#4a90d8" />
            <path d="M1 10h32v18H1z" fill="#f7e39a" stroke="#d8b656" />
            <path d="M5 31V21q0-3 3-3h18q3 0 3 3v10h-6v-6H11v6z" fill="#9fd4f0" stroke="#4f9dcc" />
        </svg>
    );
}

function NotepadIcon() {
    return (
        <svg width="32" height="32" viewBox="0 0 32 32">
            <path d="M12 4l19 1-2 24-20-1z" fill="#8a7350" />
            <path d="M11 3l19 1-5 25-23-5z" fill="#dff1f5" stroke="#7fa8b0" strokeWidth=".5" />
            <path d="M11 3l17 1-6 24-20-5z" fill="#58a9bf" />
            <path d="M11 3l17 1-3 11-19-1z" fill="#a0d5e0" />
            <path d="M12 1v4M15 1v4M18 1v4M21 1v4M24 2v4M27 2v4" stroke="#777" />
        </svg>
    );
}

function MediaIcon() {
    return (
        <svg width="30" height="30" viewBox="0 0 30 30">
            <path d="M9 2l18 2v21l-10 3z" fill="#5a9fc8" />
            <path d="M6 3h18v23l-8 2z" fill="#a8d3ea" stroke="#5a9fc8" />
            <rect x="2" y="3" width="20" height="24" fill="#8cc4e6" stroke="#5193bd" />
            <circle cx="12" cy="15" r="9" fill="#ee6d14" />
            <path d="M9 10l8 5-8 5z" fill="#fff" />
        </svg>
    );
}

function FirefoxIcon() {
    return (
        <svg width="32" height="32" viewBox="0 0 32 32">
            <path d="M19 1c3 3 5 4 6 8 3-1 2-3 3-4 3 6 4 14 0 20-6 9-19 8-25 1C-1 19 0 11 5 5c0 2 1 3 2 3 4-1 5 0 7 1 1-4 3-6 5-8z" fill="#fb5a36" />
            <path d="M19 1c3 3 5 4 6 8 3-1 2-3 3-4 3 6 4 14 0 20-3 4-7 6-12 6 8-4 10-13 5-19-3-3-5-6-2-11z" fill="#ffb52b" />
            <circle cx="16" cy="18" r="7" fill="#8a3be0" />
            <path d="M4 11c4-2 7 0 9 2 3 0 5-1 6 1-2 2-5 1-7 4 2 3 8 3 11-1 1 7-6 11-12 8-6-2-8-8-7-14z" fill="#ff8a1e" />
            <path d="M3 20c3 8 14 11 21 6-4 5-10 6-15 4-4-2-6-6-6-10z" fill="#e31587" />
        </svg>
    );
}

function MailBirdIcon() {
    return (
        <svg width="34" height="34" viewBox="0 0 34 34">
            <circle cx="18" cy="17" r="15" fill="#1e5fae" />
            <path d="M6 7C14-3 28 1 32 11c3 9-2 17-9 20 6-8 5-17-3-22-5-3-10-3-14-2z" fill="#3f8ee0" />
            <path d="M1 14c2-6 8-8 14-5 4 2 5 5 3 8L6 28C2 24 0 19 1 14z" fill="#14376e" />
            <path d="M7 20l12-5 7 7-9 10C12 32 8 28 7 26z" fill="#f4f6f8" />
            <path d="M7 20l10 4 4-8" fill="none" stroke="#b8c2cc" />
            <circle cx="10" cy="10" r="2" fill="#e7bd55" />
        </svg>
    );
}

function HeadphonesIcon() {
    return (
        <svg width="30" height="30" viewBox="0 0 30 30">
            <path d="M4 18C3-2 27-2 26 18" fill="none" stroke="#0a0a5a" strokeWidth="3" />
            <path d="M7 19l3-5 1 2 2-7 2 3 2-4 2 7 1-2 3 6v7l-3 2-3 1h-4l-3-1-3-2z" fill="#f7a80c" />
            <path d="M7 20h16l-2 2-2-3-2 4-3-4-2 4-2-3z" fill="#ee3a1c" />
            <rect x="1" y="14" width="6" height="13" rx="3" fill="#16169a" />
            <rect x="23" y="14" width="6" height="13" rx="3" fill="#16169a" />
            <path d="M7 14v13M23 14v13" stroke="#4b8ef0" />
        </svg>
    );
}

function CameraIcon() {
    return (
        <svg width="34" height="32" viewBox="0 0 34 32">
            <path d="M14 24L30 5l3 1-4 22-14 1z" fill="#2a2a2a" />
            <path d="M2 9l9-2 3-3 7-1 3 3 8 1-1 14-20 4-8-4z" fill="#1a1a1a" stroke="#6c6c6c" />
            <path d="M14 4l7-1 3 3-10 1z" fill="#8c8c8c" />
            <circle cx="10" cy="15" r="8" fill="#3b3b3b" stroke="#777" />
            <circle cx="9" cy="15" r="5" fill="#0d0d1a" stroke="#999" />
            <circle cx="8" cy="14" r="2.500" fill="#6a7fc2" />
            <path d="M22 9h8v8l-6 3z" fill="#555" />
        </svg>
    );
}

function AirspyLogo() {
    return (
        <Logo width="84" height="34" viewBox="0 0 84 34" role="img" aria-label="AIRSPY">
            <text x="1" y="31" fill="#f2f2f2" stroke="#f2f2f2" strokeWidth="1.500" fontFamily="Roboto, sans-serif" fontWeight="900" fontSize="19">AIRSPY</text>
            <path d="M10 16l-3 16M27 16v16M40 16l-3 16M50 16v16" stroke={color.window} strokeWidth="1" />
            <g fill="none" stroke="#e8e8e8" strokeWidth="2">
                <path d="M67 14q5 0 6 6" />
                <path d="M67 9q10 1 11 11" />
                <path d="M67 4q15 1 16 16" />
            </g>
        </Logo>
    );
}

const TASKS = [
    ['Internet Explorer', <ExplorerEIcon />],
    ['Windows Explorer', <FolderIcon />],
    ['Notepad', <NotepadIcon />],
    ['Media Player', <MediaIcon />],
    ['Firefox', <FirefoxIcon />],
    ['Thunderbird', <MailBirdIcon />, 'open'],
    ['Audacity', <HeadphonesIcon />],
    ['SDR#', <SdrIcon size={32} />, 'active'],
    ['Camera', <CameraIcon />, 'open'],
];

function App() {
    return (
        <Screen>
            <GlobalStyle />
            <TitleBar>
                <SdrIcon size={16} />
                <TitleText>AIRSPY SDR# v1.0.0.1776 - AIRSPY HF+ Dual / Discovery</TitleText>
                <WindowButton aria-label="Minimize">
                    <svg width="10" height="10" viewBox="0 0 10 10"><path d="M0 5h10v2H0z" fill="#fff" /></svg>
                </WindowButton>
                <WindowButton aria-label="Restore">
                    <svg width="13" height="14" viewBox="0 0 13 14" fill="none" stroke="#fff">
                        <path d="M4 3V.5h8.500V8H10" /><path d="M3.500 1.500h9" strokeWidth="3" />
                        <path d="M.5 6v7.500h9V6" /><path d="M0 6.500h10" strokeWidth="3" />
                    </svg>
                </WindowButton>
                <WindowButton aria-label="Close">
                    <svg width="10" height="10" viewBox="0 0 10 10" stroke="#fff" strokeWidth="2.500"><path d="M1 1l8 8M9 1L1 9" /></svg>
                </WindowButton>
            </TitleBar>

            <Toolbar>
                <ToolGroup>
                    <ToolButton aria-label="Menu">
                        <svg width="24" height="22" viewBox="0 0 24 22" fill="#fff"><path d="M0 0h24v5H0zM0 8h24v5H0zM0 16h24v5H0z" /></svg>
                    </ToolButton>
                    <ToolButton aria-label="Play">
                        <svg width="10" height="18" viewBox="0 0 10 18" fill="#fff"><path d="M0 0l10 9-10 9z" /></svg>
                    </ToolButton>
                    <ToolButton aria-label="Add">
                        <svg width="18" height="18" viewBox="0 0 18 18" fill="#fff"><path d="M6 0h6v6h6v6h-6v6H6v-6H0V6h6z" /></svg>
                    </ToolButton>
                    <ToolButton aria-label="Settings"><FaCog size={24} color="#cfcfcf" /></ToolButton>
                    <ToolButton aria-label="Mute">
                        <svg width="25" height="22" viewBox="0 0 25 22" fill="none" stroke="#c0c0c0" strokeWidth="2">
                            <path d="M0 7h5l7-7v22l-7-7H0z" fill="#c0c0c0" stroke="none" />
                            <path d="M15 7q3 4 0 8M18 4q5 7 0 14" />
                            <path d="M21 1q7 10 0 20" strokeWidth="1.500" />
                        </svg>
                    </ToolButton>
                </ToolGroup>
                <VolumeBox><HSlider label="Volume" start={74} count={21} /></VolumeBox>
                <Frequency><Idle>000.0</Idle>12.210.000</Frequency>
                <ToolGroup>
                    <ToolButton aria-label="Center">
                        <svg width="22" height="20" viewBox="0 0 22 20" fill="#fff">
                            <path d="M0 0l10 10L0 20zM22 0L12 10l10 10z" /><path d="M10.500 0h1v20h-1z" fill="#999" />
                        </svg>
                    </ToolButton>
                </ToolGroup>
                <AirspyLogo />
            </Toolbar>

            <Workspace>
                <Sidebar>
                    <Sections>
                        <SourceSection />
                        <RadioSection />
                        <AudioSection />
                    </Sections>
                    <Scrollbar>
                        <ScrollButton aria-label="Scroll up">
                            <svg width="8" height="5" viewBox="0 0 8 5" fill="#999"><path d="M4 0l4 5H0z" /></svg>
                        </ScrollButton>
                        <ScrollTrack><ScrollThumb /></ScrollTrack>
                        <ScrollButton aria-label="Scroll down">
                            <svg width="8" height="5" viewBox="0 0 8 5" fill="#999"><path d="M4 5l4-5H0z" /></svg>
                        </ScrollButton>
                    </Scrollbar>
                </Sidebar>
                <Displays>
                    <Spectrum />
                    <Waterfall />
                </Displays>
                <LevelColumn>
                    <VSlider name="Zoom" start={0} />
                    <VSlider name="Contrast" start={45} />
                    <VSlider name="Range" start={20} />
                    <VSlider name="Offset" start={41} />
                </LevelColumn>
            </Workspace>

            <Taskbar>
                <StartButton><WindowsLogo />Start</StartButton>
                {TASKS.map(([name, icon, state]) => (
                    <TaskButton key={name} aria-label={name} $open={state === 'open'} $active={state === 'active'}>
                        {icon}
                    </TaskButton>
                ))}
                <Tray>
                    <svg width="6" height="9" viewBox="0 0 6 9" fill="none" stroke="#000" strokeWidth="1.500"><path d="M.5 4L3 1l2.500 3M.5 8L3 5l2.500 3" /></svg>
                    <Clock>{'10:15 PM\n11/4/2022'}</Clock>
                    <svg width="16" height="14" viewBox="0 0 16 14">
                        <rect width="16" height="12" fill="#a9bcd8" /><rect x="1" y="1" width="14" height="8" fill="#2f6fd0" />
                        <rect x="6" y="9" width="10" height="2" fill="#333" /><rect x="1" y="8" width="3" height="3" fill="#e0b83a" />
                    </svg>
                </Tray>
            </Taskbar>
        </Screen>
    );
}

export default App;
